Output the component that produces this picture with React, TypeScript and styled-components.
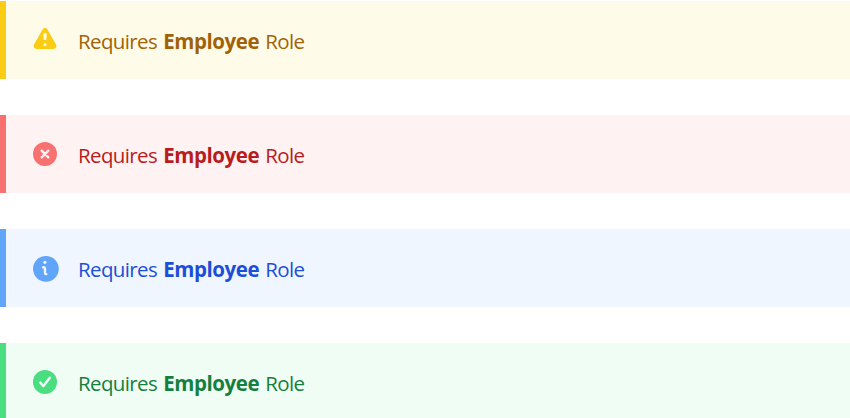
import React from "react";
import styled, { createGlobalStyle } from "styled-components";

const GlobalStyle = createGlobalStyle`
  * { box-sizing: border-box; }
  body { margin: 0; background: #fff; overflow: hidden; }
`;

const List = styled.main`
  display: flex;
  flex-direction: column;
  gap: 36px;
  padding-top: 1px;
  height: 418px;
  overflow: hidden;
`;

const Alert = styled.div<{ $accent: string; $bg: string; $color: string }>`
  display: flex;
  flex: none;
  height: 78px;
  padding: 24px;
  border-left: 6px solid ${(p) => p.$accent};
  background: ${(p) => p.$bg};
  color: ${(p) => p.$color};
`;

const Icon = styled.svg<{ $tone: string; $mark: string }>`
  flex: none;
  width: 30px;
  height: 30px;
  fill: ${(p) => p.$tone};

  .stroke {
    fill: none;
    stroke: ${(p) => p.$mark};
    stroke-width: 2.4;
    stroke-linecap: round;
    stroke-linejoin: round;
  }
  .stroke.wide { stroke-width: 3; }
  .dot { fill: ${(p) => p.$mark}; }
`;

const Message = styled.p`
  margin: 1px 0 0 18px;
  font: 400 20.5px/30px "Open Sans", "Noto Sans", sans-serif;
  letter-spacing: -0.62px;
  word-spacing: 1.3px;
  white-space: nowrap;
`;

const Role = styled.strong`
  font-weight: 700;
  letter-spacing: -0.42px;
`;

/* Glyphs are drawn on a 30-unit grid, one unit per pixel. */
const icons = {
  warning: (
    <>
      <path d="M12.4 4.65c1.15-2.05 4.05-2.05 5.2 0l8.4 14.9c1.1 2-.3 4.45-2.6 4.45H6.6c-2.3 0-3.7-2.45-2.6-4.45z" />
      <path className="stroke wide" d="M15 9.2v4.4" />
      <circle className="dot" cx="15" cy="19.4" r="1.5" />
    </>
  ),
  error: (
    <>
      <circle cx="15" cy="15" r="12" />
      <path className="stroke" d="M11.7 11.7l6.6 6.6M18.3 11.7l-6.6 6.6" />
    </>
  ),
  info: (
    <>
      <circle cx="15.9" cy="15.8" r="12.9" />
      <circle className="dot" cx="14.9" cy="9.3" r="1.6" />
      <path className="stroke" d="M13.1 14.4c1.3-.4 1.9.2 1.9 1.4v4c0 1 .4 1.3 1.3 1.3" />
    </>
  ),
  success: (
    <>
      <circle cx="15" cy="15" r="12" />
      <path className="stroke" d="M10.2 15.6l3.2 3.5 6.5-8.4" />
    </>
  ),
};

const alerts = [
  { icon: icons.warning, accent: "#facc15", bg: "#fefce8", color: "#a16207" },
  { icon: icons.error, accent: "#f87171", bg: "#fef2f2", color: "#b91c1c" },
  { icon: icons.info, accent: "#60a5fa", bg: "#eff6ff", color: "#1d4ed8" },
  { icon: icons.success, accent: "#4ade80", bg: "#f0fdf4", color: "#15803d" },
];

export default function App() {
  return (
    <>
      <GlobalStyle />
      <List>
        {alerts.map((a) => (
          <Alert key={a.accent} $accent={a.accent} $bg={a.bg} $color={a.color}>
            <Icon viewBox="0 0 30 30" $tone={a.accent} $mark={a.bg} aria-hidden="true">
              {a.icon}
            </Icon>
            <Message>
              Requires <Role>Employee</Role> Role
            </Message>
          </Alert>
        ))}
      </List>
    </>
  );
}
